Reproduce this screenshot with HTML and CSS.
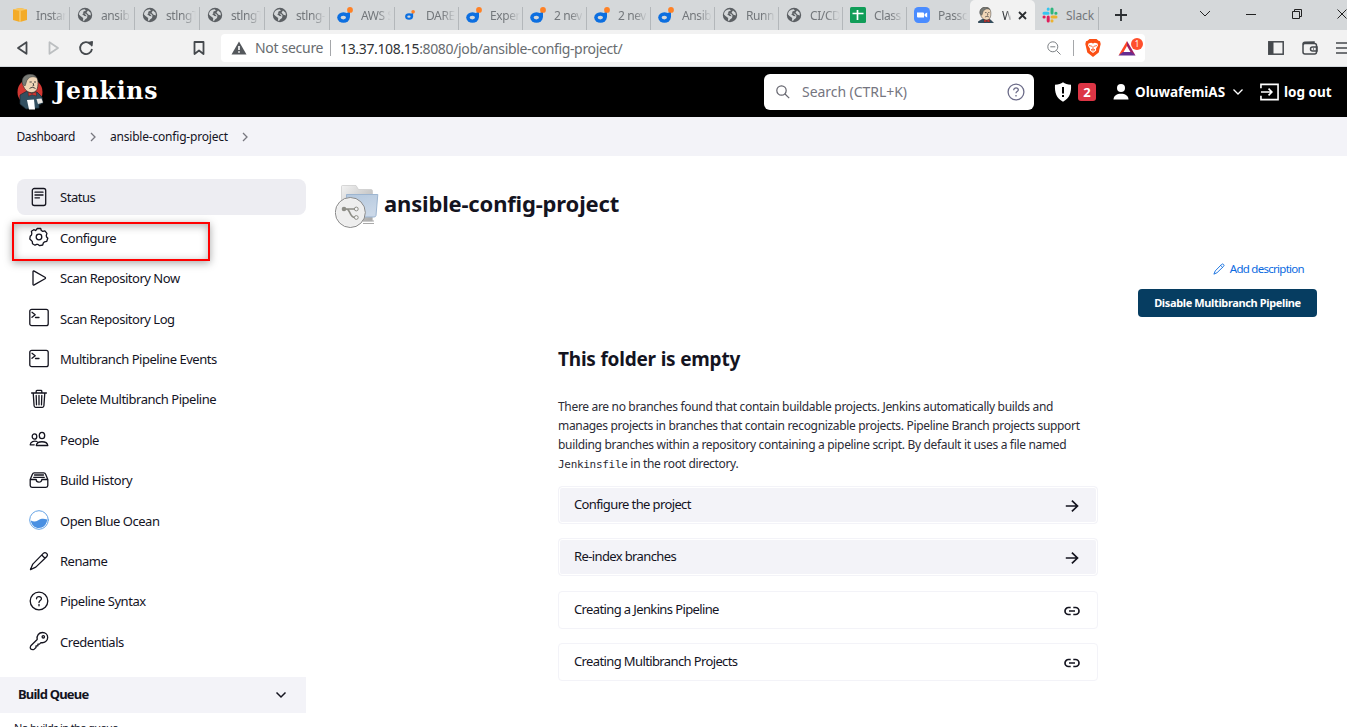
FILE: index.html
```html
<!DOCTYPE html>
<html lang="en">
<head>
<meta charset="utf-8">
<title>ansible-config-project [Jenkins]</title>
<link rel="stylesheet" href="styles.css">
</head>
<body>
<svg class="defs" aria-hidden="true">
  <symbol id="globe" viewBox="0 0 16 16"><circle cx="8" cy="8" r="7.2" fill="#5c6064"/><path d="M2 7.500C2 4.500 4.500 2.300 7.500 2.200L9 3.500 6.500 4.500 6 6.500l3 .3 1.500 1.700-.5 2.500L8 12.500 7 14l-1-.5.200-2.500L3.500 9z" fill="#d5d8da"/><path d="M7 6l-1.800 1.200L7.500 9l2.300.300z" fill="#5c6064"/><path d="M9.500 5.500L11 3.500l2.500 2.300.4 2.700-2.400-.7z" fill="#d5d8da"/></symbol>
  <symbol id="dare" viewBox="0 0 16 16"><ellipse cx="6.500" cy="10.500" rx="6.300" ry="5.200" fill="#0d6fe0"/><path d="M9 6.500l4-2.200v5.500L9 14z" fill="#0d6fe0"/><ellipse cx="6.300" cy="10.600" rx="2.700" ry="1.800" fill="#d5d8da"/><circle cx="13" cy="2.900" r="2.900" fill="#ff8125"/></symbol>
  <symbol id="butler" viewBox="0 0 32 36"><path d="M5 21l7-4 4 2 6-1 5 5 1 6-4 2 0 3-13 1-6-5z" fill="#335061" stroke="#1a2a33" stroke-width=".7"/><path d="M7.500 9C7 3 11 .5 15 .4c5 0 8 3 8 8 0 6-1 10-6.500 10.200-4.500 0-8-4-9-9.600z" fill="#f0d6b7" stroke="#333" stroke-width=".7"/><path d="M7.500 10C6 4 10 .3 15 .3c3 0 5.500 1 6.500 3.200-4-1.500-7-.5-8.500 1.500C11 7 11.500 9 10 12z" fill="#777a75" stroke="#333" stroke-width=".5"/><path d="M14.500 8h2.300M19 8h2M18 9l.8 2.500-1.300.5M14.500 14.500c2-1.500 4-1.300 6 0" fill="none" stroke="#333" stroke-width=".9"/><path d="M13 18l4 1.500 4-1.800.5 4.300-4.500-1.300-3.500 1.500z" fill="#d33833" stroke="#222" stroke-width=".4"/><path d="M12 26l7-.5 1 10h-6z" fill="#fff"/><path d="M21.500 25l5-.5 1.500 4-5 1.500z" fill="#e9e6e2"/></symbol>
  <symbol id="terminal" viewBox="0 0 20 20"><rect x=".8" y="1.300" width="18.400" height="16.400" rx="2" /><path d="M3 4.300l3.200 2.500L3 9.300M6.500 9.500h3.500"/></symbol>
  <symbol id="pencil" viewBox="0 0 20 20"><path d="M14.300 2.400a2 2 0 0 1 3.300 3.300L6.800 16.100 1.500 18.600l2.300-5.500zM12.700 4l3.300 3.200"/></symbol>
  <symbol id="arrow" viewBox="0 0 14 14"><path d="M.8 7h11.400M6.900 1.600L12.500 7l-5.600 5.400"/></symbol>
  <symbol id="link" viewBox="0 0 16 10"><path d="M6.700 1.500H4.500a3.500 3.500 0 0 0 0 7h2.200M9.300 1.500h2.200a3.500 3.500 0 0 1 0 7H9.300M5 5h6"/></symbol>
  <symbol id="down" viewBox="0 0 12 8"><path d="M1.500 1.500L6 6l4.500-4.500"/></symbol>
</svg>

<div class="tabs">
  <div class="tab wide"><svg class="fav" viewBox="0 0 16 16"><path d="M1 2.500L8 1l7 1.500V13L8 15 1 13z" fill="#f3ab28"/><path d="M1 2.500l7 1.500 7-1.500L8 1z" fill="#f9c660"/><path d="M8 4v11" stroke="#fbd88b"/></svg><span>Instan</span></div>
  <div class="tab wide"><svg class="fav"><use href="#globe"/></svg><span>ansib</span></div>
  <div class="tab wide"><svg class="fav"><use href="#globe"/></svg><span>stlngT</span></div>
  <div class="tab wide"><svg class="fav"><use href="#globe"/></svg><span>stlngT</span></div>
  <div class="tab wide"><svg class="fav"><use href="#globe"/></svg><span>stlng-</span></div>
  <div class="tab wide"><svg class="fav"><use href="#dare"/></svg><span>AWS S</span></div>
  <div class="tab"><svg class="fav tiny"><use href="#dare"/></svg><span>DARE</span></div>
  <div class="tab"><svg class="fav"><use href="#dare"/></svg><span>Exper</span></div>
  <div class="tab"><svg class="fav"><use href="#dare"/></svg><span>2 nev</span></div>
  <div class="tab"><svg class="fav"><use href="#dare"/></svg><span>2 nev</span></div>
  <div class="tab"><svg class="fav"><use href="#dare"/></svg><span>Ansib</span></div>
  <div class="tab"><svg class="fav"><use href="#globe"/></svg><span>Runn</span></div>
  <div class="tab"><svg class="fav"><use href="#globe"/></svg><span>CI/CD</span></div>
  <div class="tab"><svg class="fav" viewBox="0 0 16 16"><rect width="16" height="16" rx="1.500" fill="#109d58"/><path d="M2.500 6.500h11M7.500 3v10" stroke="#fff" stroke-width="1.700"/></svg><span>Class</span></div>
  <div class="tab"><svg class="fav" viewBox="0 0 16 16"><rect width="16" height="16" rx="4.500" fill="#4a8cff"/><path d="M3 5.500h6q1 0 1 1v4H4q-1 0-1-1zM10.600 7l2.600-1.600v5L10.600 9z" fill="#fff"/></svg><span>Passc</span></div>
  <div class="tab active"><svg class="fav" viewBox="5 0 22 23"><use href="#butler" width="32" height="36"/></svg><span>W</span><svg class="close" viewBox="0 0 9 9"><path d="M1 1l7 7M8 1L1 8"/></svg></div>
  <div class="tab"><svg class="fav" viewBox="0 0 16 16" fill="none" stroke-width="3" stroke-linecap="round"><path d="M6.200 2v.2M2 6.200h4" stroke="#36c5f0"/><path d="M10 2v4M14 6.200h-.2" stroke="#2eb67d"/><path d="M10 10h4M10 14v-.2" stroke="#ecb22e"/><path d="M6.200 10v4M2 10h.2" stroke="#e01e5a"/></svg><span class="full">Slack</span></div>
  <svg class="plus" viewBox="0 0 12 12"><path d="M6 0v12M0 6h12"/></svg>
  <div class="win">
    <svg width="12" height="8" viewBox="0 0 12 8"><path d="M1 1l5 5 5-5"/></svg>
    <svg width="10" height="8" viewBox="0 0 10 8"><path d="M0 4.500h10"/></svg>
    <svg width="10" height="10" viewBox="0 0 10 10"><path d="M.5 2.500h7v7h-7zM2.500 2V.5h7v7H8"/></svg>
    <svg width="10" height="10" viewBox="0 0 10 10"><path d="M.5.500l9 9M9.500.500l-9 9"/></svg>
  </div>
</div>

<div class="toolbar">
  <svg class="nav back" viewBox="0 0 14 16"><path d="M10.500 2.200v11.600L2 8z"/></svg>
  <svg class="nav fwd" viewBox="0 0 14 16"><path d="M2.500 2.200v11.600L11 8z"/></svg>
  <svg class="nav reload" viewBox="0 0 16 16"><path d="M12.500 4A6 6 0 1 0 14 9"/><path class="dot" d="M10 2.500L14.500 1.500 14 6.200z"/></svg>
  <svg class="nav mark" viewBox="0 0 12 16"><path d="M1.500 2h9v12L6 10.500 1.500 14z"/></svg>
  <div class="address">
    <svg class="warn" viewBox="0 0 16 14"><path d="M8 .5L15.500 13.500H.5z" fill="#54585c"/><path d="M8 5v4M8 10.200v1.600" stroke="#fff" stroke-width="1.600"/></svg>
    <span class="insecure">Not secure</span>
    <span class="url"><b>13.37.108.15</b>:8080/job/ansible-config-project/</span>
    <svg class="glass" viewBox="0 0 14 14"><circle cx="5.800" cy="5.800" r="5"/><path d="M3.300 5.800h5M9.500 9.500l4 4"/></svg>
    <i class="rule"></i>
    <svg class="lion" viewBox="0 0 16 18"><path d="M4.500 0h7l2 1.800 1.500.5.700 2.700-.5 2-1.500 6.500L8 18l-5.700-4.500L.800 7 .300 5 1 2.300l1.500-.5z" fill="#fb4f14"/><path d="M3.500 4.500l2.700-.8L8 4.500l1.800-.8 2.700.8.500 2-2 3.200.2 1.800L8 14l-3.200-2.500.2-1.800-2-3.200z" fill="#fff"/><path d="M4 6.500l3 .8M12 6.500l-3 .8M8 7v3.500M6 10.700l2-.5 2 .5-2 1.500z" stroke="#fb4f14" stroke-width=".8" fill="none"/></svg>
    <span class="bat"><svg viewBox="0 0 18 16"><path d="M9 1L.5 15.500 5 13 9 6z" fill="#ff4724"/><path d="M9 1l8.500 14.500L13 13 9 6z" fill="#9e1f63"/><path d="M.5 15.500h17L13 12H5z" fill="#662d91"/></svg><i>1</i></span>
  </div>
  <div class="tools">
    <svg width="16" height="14" viewBox="0 0 16 14"><rect x=".8" y=".8" width="14.400" height="12.400"/><path class="solid" d="M1 1h4.500v12H1z"/></svg>
    <svg width="16" height="14" viewBox="0 0 16 14"><rect x="1" y="2.500" width="13.500" height="10.500" rx="2"/><path d="M1 3.500q0-2 2-2.200l9-.3v1.500M15 6h-4.500a2 2 0 0 0 0 4H15zM11 8h.8"/></svg>
    <svg width="14" height="12" viewBox="0 0 14 12"><path d="M0 1h14M0 6h14M0 11h14"/></svg>
  </div>
</div>

<header class="header">
  <svg class="logo" viewBox="0 0 32 36"><ellipse cx="15" cy="18" rx="12.500" ry="13" fill="#d33833"/><use href="#butler" width="32" height="36"/></svg>
  <span class="brand">Jenkins</span>
  <div class="search">
    <svg class="mag" viewBox="0 0 14 14"><circle cx="5.500" cy="5.500" r="4.700"/><path d="M9 9l4.200 4.200"/></svg>
    <span>Search (CTRL+K)</span>
    <svg class="help" viewBox="0 0 18 18"><circle cx="9" cy="9" r="7.900"/><path d="M6.700 7.200C6.700 4 11.500 4.300 11.300 7c-.1 1.500-2.300 1.700-2.300 3.200M9 12v1.500"/></svg>
  </div>
  <svg class="shield" viewBox="0 0 18 20"><path d="M9 .3c2 1.500 4.500 2.200 8 2.400.5 8-1.500 13.500-8 17C2.500 16.200.500 10.700 1 2.700 4.500 2.500 7 1.800 9 .3z" fill="#fff"/><path d="M9 5v6.500M9 13v2" stroke="#000" stroke-width="2"/></svg>
  <span class="count">2</span>
  <svg class="person" viewBox="0 0 16 16"><circle cx="8" cy="4" r="4" fill="#fff"/><path d="M.5 15.500C.5 11.500 4 9.700 8 9.700s7.500 1.800 7.500 5.800z" fill="#fff"/></svg>
  <span class="user">OluwafemiAS</span>
  <svg class="drop"><use href="#down"/></svg>
  <svg class="exit" viewBox="0 0 20 18"><path d="M1 5V1h18v16H1v-4M1 9h11M9 5.500L12.500 9 9 12.500"/></svg>
  <span class="logout">log out</span>
</header>

<nav class="crumbs">
  <span class="c1">Dashboard</span><svg viewBox="0 0 6 10"><path d="M1 1l4 4-4 4"/></svg>
  <span class="c2">ansible-config-project</span><svg viewBox="0 0 6 10"><path d="M1 1l4 4-4 4"/></svg>
</nav>

<div class="page">
  <aside class="side">
    <div class="tasks">
      <a class="task current"><svg viewBox="0 0 20 20"><rect x="3.300" y="1.500" width="13.400" height="17" rx="2"/><path d="M6 5.200h8M6 8h8M6 10.800h4.500"/></svg><span>Status</span></a>
      <a class="task marked"><svg viewBox="0 0 20 20"><circle cx="10" cy="10" r="2.800"/><path d="M8.300 1.500h3.400l.6 2 1.500.9 2.100-.6 2 2.500-.6 2.200.3 1.500 1.200 1.300-1 3-2.200.5-1.300 1.200-.6 2-3 .7-1.700-1.300H7.700L6 18.200l-2.500-1.400-.2-2.200-1-1.200-1.500-1.300.4-2.800L2.500 8l.3-1.700-.4-2 2.400-1.600 1.800.8z"/></svg><span>Configure</span></a>
      <a class="task"><svg viewBox="0 0 20 20"><path d="M4 3.800v12.400q0 1.300 1.200.7l10.800-6.100q1-.8 0-1.500L5.200 3.100Q4 2.500 4 3.800z"/></svg><span>Scan Repository Now</span></a>
      <a class="task"><svg><use href="#terminal"/></svg><span>Scan Repository Log</span></a>
      <a class="task"><svg><use href="#terminal"/></svg><span>Multibranch Pipeline Events</span></a>
      <a class="task"><svg viewBox="0 0 20 20"><path d="M4.200 4l.9 12.800q.1 1.500 1.500 1.500h6.800q1.400 0 1.500-1.500L15.800 4M2.600 4h14.800M7.200 4V2.200q0-.8.800-.8h4q.8 0 .8.800V4M10 6.500v9.300M7.200 6.500l.3 9.300M12.800 6.500l-.3 9.300"/></svg><span>Delete Multibranch Pipeline</span></a>
      <a class="task"><svg viewBox="0 0 20 20"><ellipse cx="13" cy="6.500" rx="2.700" ry="3.200"/><ellipse cx="5.500" cy="7.500" rx="2.300" ry="2.700"/><path d="M7.300 16.500c.5-5 10.800-5 11.500 0zM8 12.500c-3-1-6.500.2-6.800 3.300h4"/></svg><span>People</span></a>
      <a class="task"><svg viewBox="0 0 20 20"><path d="M1.200 9.500v6q0 1.800 1.800 1.800h14q1.800 0 1.800-1.800v-6L16.500 4q-.4-1.200-1.700-1.200H5.200Q3.900 2.800 3.500 4zM1.200 9.500h6c0 3.500 5.600 3.500 5.600 0h6M5.500 5h9M4.700 7.300h10.600"/></svg><span>Build History</span></a>
      <a class="task"><svg viewBox="0 0 20 20"><circle cx="10" cy="10" r="9.300" fill="#fff" stroke="#63a2e5" stroke-width="1"/><path d="M1.800 10.500c3 1.500 5 1 7.500-.3 3-1.500 5-1.800 8.900-.6-.3 5-4 8.500-8.200 8.500s-7.500-3-8.200-7.600z" fill="#4a90e2" stroke="none"/></svg><span>Open Blue Ocean</span></a>
      <a class="task"><svg><use href="#pencil"/></svg><span>Rename</span></a>
      <a class="task"><svg viewBox="0 0 20 20"><circle cx="10" cy="10" r="8.800"/><path d="M7.500 7.800C7.500 4.500 12.800 5 12.400 8c-.2 1.500-2.400 1.800-2.400 3.400M10 13.300v1.500"/></svg><span>Pipeline Syntax</span></a>
      <a class="task"><svg viewBox="0 0 20 20"><path d="M8.200 8.500C7.400 4.500 10 1.500 13.500 1.500c3 0 5.200 2 5.200 5 0 3.300-3 5.800-6.800 5.100l-1.400 1.500H8.900v1.700H7v1.700L5 18.400q-2 .6-3.500-.7-.7-1.500.3-2.900z"/><circle cx="14.300" cy="5.800" r="1.200"/></svg><span>Credentials</span></a>
    </div>
    <div class="queue"><span>Build Queue</span><svg><use href="#down"/></svg></div>
    <p class="idle">No builds in the queue.</p>
  </aside>

  <main class="main">
    <div class="heading">
      <svg class="folder" viewBox="0 0 44 44"><defs><linearGradient id="fg" x2="1" y2="1"><stop stop-color="#f3f3f3"/><stop offset="1" stop-color="#a8a8a8"/></linearGradient><linearGradient id="fb" y2="1" x2=".4"><stop stop-color="#b4c8de"/><stop offset="1" stop-color="#cbd8e8"/></linearGradient></defs><path d="M6.500 2.500q0-1 1-1H21l2.500 4H36q1.500 0 1.500 1.500v30h-31z" fill="url(#fg)" stroke="#c8c8c8" stroke-width=".7"/><path d="M28 37h11M28 39.500h11" stroke="#a9a9a9"/><path d="M11.500 10.500h31.300L41 31.500q-.3 1.500-2 1.500H12z" fill="url(#fb)" stroke="#9db5d0"/><circle cx="15.300" cy="28.500" r="15" fill="#f4f4f4" stroke="#888"/><circle cx="15.300" cy="28.500" r="13.800" fill="#eee"/><path d="M9 25h11M11 25c5 0 3 8.500 9 8.500" fill="none" stroke="#8d8d86" stroke-width="1.700"/><circle cx="9" cy="25" r="2.300" fill="#8d8d86"/><g fill="#f4f4f4" stroke="#8d8d86"><circle cx="21.300" cy="25" r="1.900"/><circle cx="21.300" cy="33.500" r="1.900"/></g></svg>
      <h1>ansible-config-project</h1>
    </div>
    <div class="actions">
      <a class="describe"><svg><use href="#pencil"/></svg><span>Add description</span></a>
      <button class="disable"><span>Disable Multibranch Pipeline</span></button>
    </div>
    <section class="empty">
      <h2>This folder is empty</h2>
      <p class="copy">There are no branches found that contain buildable projects. Jenkins automatically builds and<br>manages projects in branches that contain recognizable projects. Pipeline Branch projects support<br>building branches within a repository containing a pipeline script. By default it uses a file named<br><code>Jenkinsfile</code> in the root directory.</p>
      <div class="cards">
        <a class="card fill"><span>Configure the project</span><svg class="arrow"><use href="#arrow"/></svg></a>
        <a class="card fill"><span>Re-index branches</span><svg class="arrow"><use href="#arrow"/></svg></a>
        <a class="card"><span>Creating a Jenkins Pipeline</span><svg class="chain"><use href="#link"/></svg></a>
        <a class="card"><span>Creating Multibranch Projects</span><svg class="chain"><use href="#link"/></svg></a>
      </div>
    </section>
  </main>
</div>
</body>
</html>
```
FILE: styles.css
```css
* { box-sizing: border-box; }
body {
  margin: 0;
  width: 1347px;
  height: 727px;
  overflow: hidden;
  background: #fff;
  color: #14141f;
  font-family: "Noto Sans", "Open Sans", sans-serif;
  font-size: 13px;
}
svg { display: block; flex: none; fill: none; }
span { white-space: nowrap; }
.defs { position: absolute; width: 0; height: 0; }

/* Browser tabs */
.tabs { display: flex; height: 30px; padding-left: 5px; background: #d5d8da; overflow: hidden; }
.tab { position: relative; display: flex; align-items: center; flex: none; width: 64px; padding-left: 7px; font-size: 12px; color: #73777b; letter-spacing: -.4px; }
.tab.wide { width: 65px; }
.tab::after { content: ""; position: absolute; right: 0; top: 7px; bottom: 0; width: 1px; background: #b3b7ba; }
.tab .fav { width: 16px; height: 16px; margin-right: 8px; }
.tab .fav.tiny { width: 10px; height: 10px; margin: 0 11px 0 3px; }
.tab span { flex: none; -webkit-mask-image: linear-gradient(90deg, #000 16px, transparent 30px); mask-image: linear-gradient(90deg, #000 16px, transparent 30px); }
.tab span.full { -webkit-mask-image: none; mask-image: none; letter-spacing: -.1px; }
.tab.active { margin-left: -1px; width: 65px; padding-left: 8px; background: #f2f2f2; border-radius: 5px 5px 0 0; color: #33363a; }
.tab.active::after { display: none; }
.tab.active span { width: 9px; margin-right: 7px; -webkit-mask-image: linear-gradient(90deg, #000 4px, transparent 10px); mask-image: linear-gradient(90deg, #000 4px, transparent 10px); }
.close { width: 9px; height: 9px; stroke: #2b2e31; stroke-width: 1.800; }
.plus { width: 12px; height: 12px; margin: 9px 0 0 16px; stroke: #2b2e31; stroke-width: 1.800; }
.win { display: flex; align-items: center; gap: 35.300px; height: 28px; margin-left: 72px; stroke: #222; }

/* Navigation toolbar */
.toolbar { display: flex; align-items: center; height: 37px; background: #f2f2f2; border-bottom: 1px solid #d3d8dc; overflow: hidden; }
.nav { height: 16px; stroke: #45494d; stroke-width: 1.800; stroke-linejoin: round; }
.back { width: 14px; margin-left: 16px; }
.fwd { width: 14px; margin-left: 17px; stroke: #bcbfc1; }
.reload { width: 16px; margin-left: 17px; }
.reload .dot { fill: #45494d; stroke-width: 1; }
.mark { width: 12px; margin-left: 99px; }
.address { display: flex; flex: none; align-items: center; width: 924px; height: 28px; margin-left: 16px; padding-left: 10px; background: #fff; border-radius: 4px; font-size: 14px; color: #686c70; }
.warn { width: 16px; height: 14px; }
.insecure { flex: none; width: 76px; margin-left: 8px; letter-spacing: -.3px; border-right: 1px solid #a5a7aa; line-height: 16px; }
.url { flex: none; width: 707px; margin-left: 9px; letter-spacing: -.350px; }
.url b { font-weight: 400; color: #303336; }
.glass { width: 14px; height: 14px; stroke: #7b7f83; }
.rule { width: 1px; height: 16px; margin-left: 12px; background: #a5a7aa; }
.lion { width: 16px; height: 18px; margin-left: 11px; }
.bat { position: relative; flex: none; width: 25px; height: 16px; margin-left: 17px; }
.bat svg { width: 18px; height: 16px; }
.bat i { position: absolute; right: 0; top: -2px; width: 12px; height: 12px; border-radius: 6px; background: #ff4f2c; color: #fff; font: 8px/12px "Noto Sans", sans-serif; text-align: center; }
.tools { display: flex; flex: none; align-items: center; gap: 18px; margin-left: 123px; stroke: #45494d; stroke-width: 1.500; }
.tools .solid { fill: #45494d; stroke: none; }

/* Jenkins header */
.header { display: flex; align-items: center; height: 50px; background: #000; color: #fff; font-weight: 700; }
.logo { width: 32px; height: 36px; margin-left: 15px; }
.brand { width: 104px; margin: -3px 606px 0 7px; font: 700 23.500px/30px "DejaVu Serif", serif; letter-spacing: .800px; }
.search { display: flex; align-items: center; width: 270px; height: 36px; padding: 0 9px 0 12px; background: #fff; border-radius: 6px; color: #757580; font-weight: 400; }
.mag { width: 14px; height: 14px; margin-right: 12px; stroke: #65656e; stroke-width: 1.200; }
.search span { flex: 1; margin-top: -2px; font-size: 14px; letter-spacing: -.050px; }
.help { width: 18px; height: 18px; stroke: #6b6b88; stroke-width: 1.300; }
.shield { width: 18px; height: 20px; margin-left: 20px; }
.count { width: 18px; height: 18px; margin-left: 6px; border-radius: 3px; background: #dc3545; line-height: 18px; text-align: center; }
.person { width: 16px; height: 16px; margin-left: 17px; }
.user { width: 90px; margin-left: 6px; font-size: 13.500px; letter-spacing: -.030px; }
.drop { width: 12px; height: 8px; margin-left: 7px; stroke: #fff; stroke-width: 1.300; }
.exit { width: 19px; height: 18px; margin-left: 16px; stroke: #fff; stroke-width: 1.700; }
.logout { margin-left: 5px; font-size: 13.500px; }

/* Breadcrumbs */
.crumbs { display: flex; align-items: center; height: 39px; padding-left: 16.500px; background: #f3f3f8; font-size: 12px; }
.crumbs svg { width: 6px; height: 10px; stroke: #77777f; stroke-width: 1.300; }
.c1 { width: 73px; letter-spacing: -.420px; }
.c2 { width: 132px; margin-left: 14.500px; letter-spacing: -.200px; }

/* Side panel */
.page { display: flex; height: 571px; }
.side { width: 306px; flex: none; }
.tasks { display: flex; flex-direction: column; gap: 4.420px; height: 521px; padding: 23.420px 0 0 17px; }
.task { display: flex; flex: none; align-items: center; height: 36px; padding-left: 12px; }
.task.current { background: #ededf2; border-radius: 8px; }
.task svg { width: 20px; height: 20px; margin-right: 11px; margin-top: -1px; stroke: #14141f; stroke-width: 1.300; stroke-linejoin: round; stroke-linecap: round; }
.task span { letter-spacing: -.470px; }
.task.marked { position: relative; }
.task.marked::before { content: ""; box-sizing: border-box; position: absolute; left: -5px; top: 2.170px; width: 198px; height: 39px; border: 2px solid #ff0000; box-shadow: 0 2px 8px rgba(0,0,0,.35), inset 0 2px 8px rgba(0,0,0,.3); }
.queue { display: flex; align-items: center; justify-content: space-between; height: 36px; padding: 0 19px 0 18px; background: #f3f3f8; font-weight: 700; letter-spacing: -.8px; }
.queue span { margin-top: -2px; }
.queue svg { width: 12px; height: 8px; stroke: #14141f; stroke-width: 1.500; }
.idle { margin: 7px 0 0 14px; font-size: 11px; line-height: 16px; letter-spacing: -.6px; }

/* Main panel */
.main { width: 1011px; padding: 28px 0 0 29px; }
.heading { display: flex; align-items: center; height: 44px; }
.folder { width: 44px; height: 44px; }
h1 { margin: -6px 0 0 5px; font-size: 22px; line-height: 30px; letter-spacing: -.170px; }
.actions { display: flex; flex-direction: column; align-items: flex-end; margin-top: 31px; }
.describe { display: flex; align-items: center; gap: 5px; height: 20px; margin-right: 13px; color: #0b6adf; font-size: 11.500px; letter-spacing: -.720px; }
.describe span { margin-top: -2px; }
.describe svg { width: 12px; height: 12px; stroke: #0b6adf; stroke-width: 1.500; }
.disable { width: 179px; height: 28px; margin-top: 10px; padding: 0 0 2px; border: 0; border-radius: 4px; background: #063d61; color: #fff; font: 700 11px "Noto Sans", sans-serif; letter-spacing: -.370px; }
.empty { width: 540px; margin: 27px 0 0 223px; }
h2 { margin: 0; font-size: 19px; line-height: 30px; letter-spacing: -.210px; }
.copy { margin: 23px 0 0; font-size: 12px; line-height: 19px; color: #2c2c36; letter-spacing: -.325px; white-space: nowrap; }
.copy code { font: 11px "DejaVu Sans Mono", monospace; letter-spacing: -.3px; }
.cards { display: flex; flex-direction: column; gap: 14.400px; margin-top: 13px; }
.card { display: flex; align-items: center; justify-content: space-between; height: 38px; padding: 0 17px 2px 15px; border: 1px solid #f3f3f8; border-radius: 4px; letter-spacing: -.620px; }
.card.fill { background: #f3f3f8; box-shadow: inset 0 0 0 1px #fff; }
.card svg { margin-top: 4px; stroke: #14141f; stroke-width: 1.700; }
.arrow { width: 14px; height: 14px; margin-right: 1px; }
.chain { width: 16px; height: 10px; }
```
